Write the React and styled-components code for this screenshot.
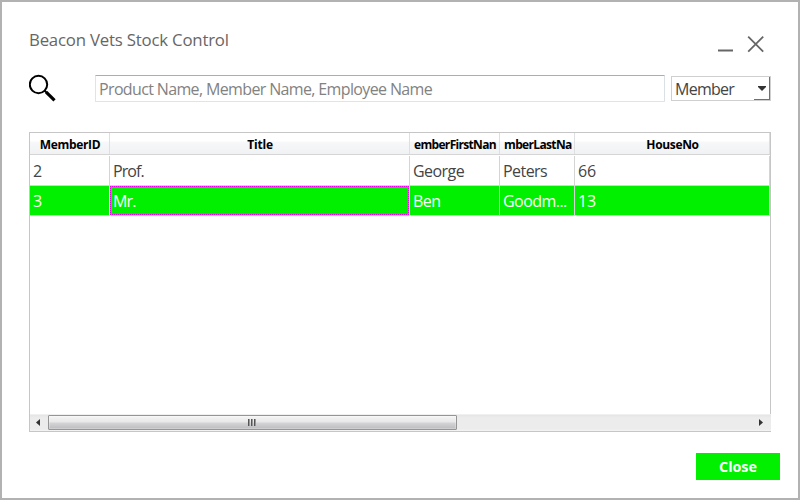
import React from "react";
import styled, { createGlobalStyle } from "styled-components";

const GlobalStyle = createGlobalStyle`
  * { box-sizing: border-box; }
  body { margin: 0; background: #fff; }
`;

const Window = styled.main`
  display: flex;
  flex-direction: column;
  width: 800px;
  height: 500px;
  padding: 26px 18px 18px 27px;
  border: 2px solid #b2b2b2;
  background: #fff;
  color: #444;
  font: 16px/24px "Open Sans", "Noto Sans", sans-serif;
  overflow: hidden;
`;

const Label = styled.span`
  display: inline-block;
  white-space: nowrap;
  letter-spacing: ${(p) => p.$track || 0}px;
`;

const TitleBar = styled.header`
  display: flex;
  justify-content: space-between;
  height: 46px;
  color: #666;
  font-size: 16.8px;
`;

const WindowButtons = styled.div`
  display: flex;
  gap: 13px;
  padding: 7px 16px 0 0;
`;

const IconButton = styled.button`
  display: block;
  width: 17px;
  height: 18px;
  padding: 0;
  border: 0;
  background: none;
  svg { display: block; }
`;

const SearchBar = styled.div`
  display: grid;
  grid-template-columns: 60px 570px 100px;
  column-gap: 6px;
  height: 58px;
  align-items: start;
`;

const SearchIcon = styled.svg`
  display: block;
`;

const SearchField = styled.div`
  height: 27px;
  margin-top: 1px;
  padding: 1px 3px;
  border: 1px solid #e2e3ea;
  border-top-color: #abadb3;
  border-right-color: #dbdfe6;
  border-radius: 1px;
  color: #828282;
`;

const Select = styled.div`
  display: flex;
  justify-content: space-between;
  height: 25px;
  margin-top: 2px;
  padding-left: 3px;
  border: 1px solid #cfcfcf;
  line-height: 24px;
`;

const SelectButton = styled.span`
  display: flex;
  justify-content: center;
  width: 16px;
  height: 23px;
  padding-top: 9px;
  border-right: 1px solid #707070;
  border-bottom: 1px solid #707070;
`;

const Table = styled.section`
  display: flex;
  flex-direction: column;
  width: 742px;
  height: 300px;
  border: 1px solid #c6c6c6;
`;

const Row = styled.div`
  display: grid;
  grid-template-columns: 80px 300px 90px 75px 195px;
  height: 30px;
  border-bottom: 1px solid #d4d4d4;
  color: ${(p) => (p.$selected ? "#fff" : "#444")};
  background: ${(p) => (p.$selected ? "#00f000" : "#fff")};
`;

const HeaderRow = styled(Row)`
  height: 23px;
  border-bottom: 1px solid #fff;
  background: linear-gradient(#fff 0 8px, #f7f8fa 9px, #f1f2f4 21px, #d5d5d5 21px 22px);
  color: #000;
  font-size: 12px;
  font-weight: 700;
  line-height: 23px;
`;

const HeaderCell = styled.div`
  min-width: 0;
  height: 21px;
  padding: 0 3px 0 4px;
  border-right: 1px solid #dedfe1;
  text-align: center;
  overflow: hidden;
`;

const Cell = styled.div`
  min-width: 0;
  padding: 3px 3px 0;
  border-right: 1px solid #d4d4d4;
  overflow: hidden;
  ${(p) => p.$focused && `
    outline: 1px dotted #f000f0;
    outline-offset: -1px;
    border-right: 0;
    margin-right: 1px;
    box-shadow: 1px 0 #d4d4d4;
  `}
`;

const Empty = styled.div`
  flex: 1;
`;

const ScrollBar = styled.div`
  display: flex;
  width: 741px;
  height: 17px;
  border-top: 1px solid #f0f0f0;
  background: linear-gradient(#e5e5e5, #ececec 3px, #ececec 14px, #f4f4f4);
`;

const ScrollArrow = styled.div`
  width: 18px;
  padding: 4px 0 0 6px;
  svg { display: block; }
`;

const Thumb = styled.div`
  display: flex;
  align-items: center;
  justify-content: center;
  width: 409px;
  height: 15px;
  border: 1px solid #959595;
  border-radius: 1px;
  background: linear-gradient(#f5f5f5 0, #e8e8ea 6px, #d4d4d7 7px, #bcbcc0 13px);
  box-shadow: inset 0 0 0 1px rgba(255, 255, 255, 0.25);
`;

const Track = styled.div`
  flex: 1;
`;

const CloseButton = styled.button`
  align-self: flex-end;
  width: 84px;
  height: 27px;
  margin-top: 21px;
  padding: 0;
  border: 0;
  background: #00f000;
  color: #fff;
  font: 700 14.3px/27px "Open Sans", sans-serif;
`;

const columns = [
  ["MemberID", -0.35],
  ["Title", -0.2],
  ["emberFirstNan", -0.68],
  ["mberLastNa", -0.65],
  ["HouseNo", -0.35],
];

const members = [
  { cells: ["2", "Prof.", "George", "Peters", "66"] },
  { cells: ["3", "Mr.", "Ben", "Goodm...", "13"], selected: true, focus: 1 },
];

const cellTracking = [0, -0.9, -0.55, -0.55, -0.1];

export default function App() {
  return (
    <>
      <GlobalStyle />
      <Window>
        <TitleBar>
          <Label $track={-0.2}>Beacon Vets Stock Control</Label>
          <WindowButtons>
            <IconButton aria-label="Minimize">
              <svg width="17" height="18" fill="none" stroke="#666" strokeWidth="2">
                <path d="M1 15.5h15" />
              </svg>
            </IconButton>
            <IconButton aria-label="Close window">
              <svg width="17" height="18" fill="none" stroke="#666" strokeWidth="1.8">
                <path d="M1.2 1.7l15 15M16.2 1.7l-15 15" />
              </svg>
            </IconButton>
          </WindowButtons>
        </TitleBar>

        <SearchBar>
          <SearchIcon width="28" height="28" fill="none" stroke="#000">
            <circle cx="9.5" cy="10.5" r="8.7" strokeWidth="2" />
            <path d="M15.5 16.5l3 3" strokeWidth="2" />
            <path d="M17.2 18.2l8.3 8.2" strokeWidth="3.2" />
          </SearchIcon>
          <SearchField>
            <Label $track={-0.64}>Product Name, Member Name, Employee Name</Label>
          </SearchField>
          <Select>
            <Label $track={-0.75}>Member</Label>
            <SelectButton>
              <svg width="8" height="5">
                <path d="M0 0h8v1L4 5 0 1z" fill="#333" />
              </svg>
            </SelectButton>
          </Select>
        </SearchBar>

        <Table>
          <HeaderRow>
            {columns.map(([name, track]) => (
              <HeaderCell key={name}>
                <Label $track={track}>{name}</Label>
              </HeaderCell>
            ))}
          </HeaderRow>
          {members.map((member) => (
            <Row key={member.cells[0]} $selected={member.selected}>
              {member.cells.map((value, i) => (
                <Cell key={i} $focused={member.focus === i}>
                  <Label $track={cellTracking[i]}>{value}</Label>
                </Cell>
              ))}
            </Row>
          ))}
          <Empty />
          <ScrollBar>
            <ScrollArrow>
              <svg width="5" height="8"><path d="M4 0v7L0 3.5z" fill="#333" /></svg>
            </ScrollArrow>
            <Thumb>
              <svg width="9" height="7" stroke="#555">
                <path d="M.5 0v7M3.5 0v7M6.5 0v7" />
                <path d="M1.5 0v7M4.5 0v7M7.5 0v7" stroke="#999" />
              </svg>
            </Thumb>
            <Track />
            <ScrollArrow>
              <svg width="5" height="8"><path d="M0 0v7l4-3.5z" fill="#333" /></svg>
            </ScrollArrow>
          </ScrollBar>
        </Table>
        <CloseButton>Close</CloseButton>
      </Window>
    </>
  );
}
